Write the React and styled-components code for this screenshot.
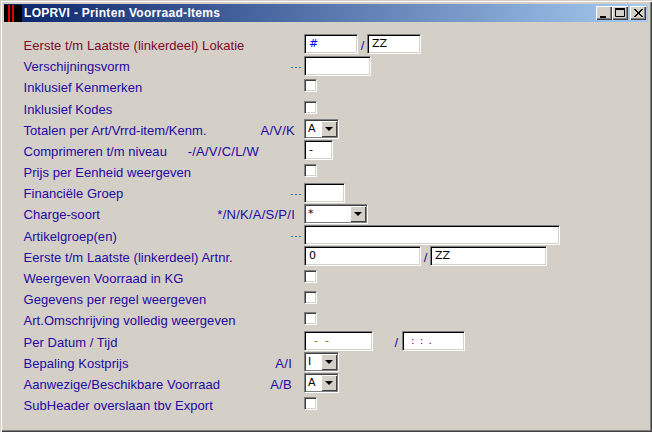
import React from 'react';
import styled, { createGlobalStyle, css } from 'styled-components';

const GlobalStyle = createGlobalStyle`
  html, body { margin: 0; padding: 0; background: #d4d0c8; }
  body { font-family: Tahoma, "Liberation Sans", Arial, sans-serif; }
`;

const Window = styled.div`
  box-sizing: border-box;
  width: 652px;
  height: 432px;
  padding: 4px;
  background: #d4d0c8;
  box-shadow: inset 1px 1px #d4d0c8, inset 2px 2px #fff, inset -1px -1px #404040, inset -2px -2px #808080;
  overflow: hidden;
`;

const TitleBar = styled.div`
  display: flex;
  align-items: center;
  height: 18px;
  background: linear-gradient(90deg, #0a246a 0%, #a6caf0 100%);
`;

const AppIcon = styled.svg`
  width: 18px;
  height: 17px;
  flex: none;
  align-self: flex-end;
  margin-right: 2px;
`;

const Title = styled.span`
  flex: 1;
  color: #fff;
  font-size: 12px;
  font-weight: bold;
  letter-spacing: 0.3px;
`;

const Controls = styled.div`
  display: flex;
  margin-right: 2px;
`;

const ControlButton = styled.div`
  box-sizing: border-box;
  width: 16px;
  height: 14px;
  margin-left: ${(p) => (p.$gap ? '2px' : '0')};
  background: #d4d0c8;
  box-shadow: inset 1px 1px #fff, inset -1px -1px #404040, inset -2px -2px #808080;
  svg { display: block; width: 16px; height: 14px; }
`;

const Form = styled.div`
  display: grid;
  grid-auto-rows: 21.2px;
  padding: 11.9px 0 0 19.5px;
`;

const Row = styled.div`
  display: flex;
  align-items: center;
  height: 21.2px;
`;

const Label = styled.div`
  flex: 1;
  min-width: 0;
  padding-top: 2px;
  font-size: 13px;
  letter-spacing: 0.05px;
  white-space: nowrap;
  color: ${(p) => (p.$required ? '#7d0a2c' : '#2408a4')};
`;

const Hint = styled.div`
  padding-top: 2px;
  font-size: 13px;
  letter-spacing: 0.25px;
  color: #2408a4;
  white-space: nowrap;
  margin-right: ${(p) => p.$right || 9}px;
`;

const Dots = styled.div`
  width: 12px;
  height: 1px;
  margin-right: 1px;
  margin-top: 3px;
  background: repeating-linear-gradient(90deg, #2a78c0 0 2px, transparent 2px 4px);
`;

const Fields = styled.div`
  display: flex;
  align-items: center;
  width: 344px;
  flex: none;
`;

const sunken = css`
  box-sizing: border-box;
  background: #fff;
  border: 1px solid;
  border-color: #808080 #fff #fff #808080;
`;

const Input = styled.div`
  ${sunken}
  width: ${(p) => p.$w}px;
  height: 20px;
  box-shadow: inset 1px 1px #000, inset -1px -1px #d4d0c8;
  padding: 0 0 0 ${(p) => p.$pad || 4}px;
  font-family: "DejaVu Sans", sans-serif;
  font-size: 11px;
  line-height: 18px;
  letter-spacing: ${(p) => p.$spacing || 0}px;
  color: ${(p) => p.$color || '#000'};
  white-space: pre;
`;

const Slash = styled.div`
  box-sizing: border-box;
  width: ${(p) => p.$w || 9}px;
  padding: 2px ${(p) => (p.$w ? 4 : 0)}px 0 0;
  font-size: 13px;
  color: #2408a4;
  text-align: ${(p) => (p.$w ? 'right' : 'center')};
  flex: none;
`;

const Check = styled.div`
  ${sunken}
  width: 13px;
  height: 13px;
  margin-bottom: 2px;
  box-shadow: inset 1px 1px #404040, inset -1px -1px #d4d0c8;
`;

const Select = styled.div`
  ${sunken}
  display: flex;
  width: ${(p) => p.$w}px;
  height: 20px;
  padding: 1px;
  box-shadow: inset 1px 1px #404040, inset -1px -1px #808080;
  font-family: "DejaVu Sans", sans-serif;
  font-size: 11px;
  line-height: 16px;
`;

const SelectValue = styled.div`
  flex: 1;
  padding-left: 2px;
  color: #000;
`;

const SelectButton = styled.div`
  box-sizing: border-box;
  width: 16px;
  flex: none;
  display: flex;
  align-items: center;
  justify-content: center;
  background: #d4d0c8;
  box-shadow: inset 1px 1px #fff, inset -1px -1px #404040;
  &::after {
    content: '';
    border-style: solid;
    border-width: 4px 4px 0;
    border-color: #000 transparent transparent;
  }
`;

const rows = [
  { label: 'Eerste t/m Laatste (linkerdeel) Lokatie', required: true, fields: [['input', 54, '#', '#0000ff'], ['slash'], ['input', 54, 'ZZ']] },
  { label: 'Verschijningsvorm', dots: true, fields: [['input', 67, '']] },
  { label: 'Inklusief Kenmerken', fields: [['check']] },
  { label: 'Inklusief Kodes', fields: [['check']] },
  { label: 'Totalen per Art/Vrrd-item/Kenm.', hint: 'A/V/K', fields: [['select', 35, 'A']] },
  { label: 'Comprimeren t/m niveau', hint: '-/A/V/C/L/W', right: 45, fields: [['input', 29, '-']] },
  { label: 'Prijs per Eenheid weergeven', fields: [['check']] },
  { label: 'Financiële Groep', dots: true, fields: [['input', 41, '']] },
  { label: 'Charge-soort', hint: '*/N/K/A/S/P/I', fields: [['select', 64, '*']] },
  { label: 'Artikelgroep(en)', dots: true, fields: [['input', 256, '']] },
  { label: 'Eerste t/m Laatste (linkerdeel) Artnr.', fields: [['input', 117, '0'], ['slash'], ['input', 117, 'ZZ']] },
  { label: 'Weergeven Voorraad in KG', fields: [['check']] },
  { label: 'Gegevens per regel weergeven', fields: [['check']] },
  { label: 'Art.Omschrijving volledig weergeven', fields: [['check']] },
  { label: 'Per Datum / Tijd', fields: [['input', 69, '-  -', '#a07000', 9], ['slash', 29], ['input', 63, ': : .', '#800080', 8, 0.8]] },
  { label: 'Bepaling Kostprijs', hint: 'A/I', right: 12, fields: [['select', 35, 'I']] },
  { label: 'Aanwezige/Beschikbare Voorraad', hint: 'A/B', right: 12, fields: [['select', 35, 'A']] },
  { label: 'SubHeader overslaan tbv Export', fields: [['check']] },
];

const Field = ({ spec }) => {
  const [kind, a, b, c, d, e] = spec;
  if (kind === 'check') return <Check />;
  if (kind === 'slash') return <Slash $w={a}>/</Slash>;
  if (kind === 'select') {
    return (
      <Select $w={a}>
        <SelectValue>{b}</SelectValue>
        <SelectButton />
      </Select>
    );
  }
  return <Input $w={a} $color={c} $pad={d} $spacing={e}>{b}</Input>;
};

export default function App() {
  return (
    <>
      <GlobalStyle />
      <Window>
        <TitleBar>
          <AppIcon viewBox="0 0 18 17">
            <rect width="18" height="17" fill="#000" />
            <rect x="4" y="0" width="2" height="17" fill="#e00000" />
            <rect x="8" y="0" width="2" height="17" fill="#e00000" />
          </AppIcon>
          <Title>LOPRVI - Printen Voorraad-Items</Title>
          <Controls>
            <ControlButton>
              <svg viewBox="0 0 16 14"><rect x="4" y="10" width="6" height="2" fill="#000" /></svg>
            </ControlButton>
            <ControlButton>
              <svg viewBox="0 0 16 14"><path d="M3.5 3.5h9v7h-9z M3 2.5h10" fill="none" stroke="#000" /></svg>
            </ControlButton>
            <ControlButton $gap>
              <svg viewBox="0 0 16 14"><path d="M4 3l8 8M5 3l8 8M12 3l-8 8M13 3l-8 8" fill="none" stroke="#000" /></svg>
            </ControlButton>
          </Controls>
        </TitleBar>
        <Form>
          {rows.map((r) => (
            <Row key={r.label}>
              <Label $required={r.required}>{r.label}</Label>
              {r.hint && <Hint $right={r.right}>{r.hint}</Hint>}
              {r.dots && <Dots />}
              <Fields>
                {r.fields.map((f, i) => <Field key={i} spec={f} />)}
              </Fields>
            </Row>
          ))}
        </Form>
      </Window>
    </>
  );
}
